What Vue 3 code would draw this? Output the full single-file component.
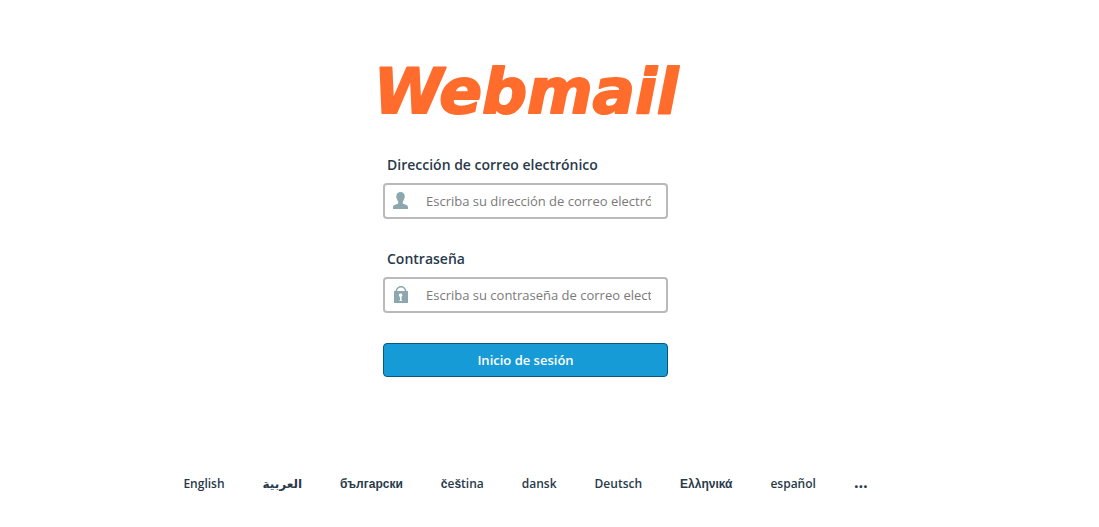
<script setup>
import { ref } from 'vue'

const email = ref('')
const password = ref('')

const before = [
  { name: 'English', lang: 'en', font: 'latin' },
  { name: 'العربية', lang: 'ar', font: 'arabic' },
  { name: 'български', lang: 'bg', font: 'wide' }
]
const after = [
  { name: 'dansk', lang: 'da', font: 'latin' },
  { name: 'Deutsch', lang: 'de', font: 'latin' },
  { name: 'Ελληνικά', lang: 'el', font: 'wide' },
  { name: 'español', lang: 'es', font: 'latin' }
]
</script>

<template>
  <main class="page">
    <h1 class="brand">
      <svg class="logo" viewBox="0 0 300 50" role="img" aria-label="Webmail">
        <text x="150" y="48" text-anchor="middle">Webmail</text>
      </svg>
    </h1>

    <form class="login" @submit.prevent>
      <label for="user">Dirección de correo electrónico</label>
      <div class="field">
        <svg class="icon" viewBox="0 0 16 18" aria-hidden="true">
          <path d="M7.500 0C9.900 0 11.500 1.300 11.500 3.600C11.500 4.200 11.900 4.400 11.800 5.200C11.700 5.900 11.300 6.100 11.100 6.700C10.800 8 10.300 8.900 9.800 9.400V11.300C10.300 12.600 15 12.400 15 15.200V17H0V15.200C0 12.400 4.700 12.600 5.200 11.300V9.400C4.700 8.900 4.200 8 3.900 6.700C3.700 6.100 3.300 5.900 3.200 5.200C3.100 4.400 3.500 4.200 3.500 3.600C3.500 1.300 5.100 0 7.500 0Z" />
        </svg>
        <input id="user" v-model="email" type="text" placeholder="Escriba su dirección de correo electrónico." />
      </div>

      <label for="pass">Contraseña</label>
      <div class="field">
        <svg class="icon" viewBox="0 0 16 18" aria-hidden="true">
          <path fill-rule="evenodd" d="M1 5H2.500C3 2 5.200 0 8 0S13 2 13.500 5H15V17H1ZM4 5H12C11.700 2.900 10.100 1.400 8 1.400S4.300 2.900 4 5ZM7.500 7.500A1.700 1.700 0 0 0 6.700 10.700V11.500H7V14H6.500V15H9V14H8.500V10.700A1.700 1.700 0 0 0 7.500 7.500Z" />
        </svg>
        <input id="pass" v-model="password" type="password" placeholder="Escriba su contraseña de correo electrónico." />
      </div>

      <button class="submit" type="submit">Inicio de sesión</button>
    </form>

    <nav class="locales" aria-label="Idioma">
      <a v-for="l in before" :key="l.lang" href="#" :lang="l.lang" :class="l.font">{{ l.name }}</a>
      <a href="#" lang="cs" class="latin"><span class="wide">č</span>e<span class="wide">š</span>tina</a>
      <a v-for="l in after" :key="l.lang" href="#" :lang="l.lang" :class="l.font">{{ l.name }}</a>
      <a href="#" class="more">…</a>
    </nav>
  </main>
</template>

<style>
body {
  margin: 0;
  background: #fff;
}
</style>

<style scoped>
.page {
  box-sizing: border-box;
  padding: 65px 48px 24px 0;
  display: flex;
  flex-direction: column;
  align-items: center;
  font-family: "Open Sans", "Liberation Sans", sans-serif;
  color: #293a4a;
}
.brand {
  margin: 0 0 40px;
  line-height: 0;
}
.logo {
  width: 300px;
  height: 50px;
  overflow: visible;
}
.logo text {
  font-family: "DejaVu Sans", sans-serif;
  font-size: 63px;
  font-weight: 700;
  font-style: italic;
  fill: #ff6c2c;
  stroke: #ff6c2c;
  stroke-width: 2px;
  stroke-linejoin: round;
}
.login {
  width: 285px;
  display: flex;
  flex-direction: column;
}
label {
  margin: 0 0 8px 4px;
  font-size: 14px;
  font-weight: 600;
  line-height: 20px;
}
.field {
  display: grid;
  align-items: center;
  margin-bottom: 30px;
}
.icon {
  grid-area: 1 / 1;
  width: 16px;
  height: 18px;
  margin-left: 10px;
  fill: #8ca7ad;
  z-index: 1;
  pointer-events: none;
}
input {
  grid-area: 1 / 1;
  box-sizing: border-box;
  width: 100%;
  height: 36px;
  padding: 0 15px 0 41px;
  border: 2px solid #bababa;
  border-radius: 4px;
  background: #fff;
  color: #293a4a;
  font-family: inherit;
  font-size: 13px;
}
input::placeholder {
  color: #7a7a7a;
}
.submit {
  height: 34px;
  padding: 0;
  border: 1px solid #095779;
  border-radius: 4px;
  background: #179bd7;
  color: #fff;
  font-family: inherit;
  font-size: 13px;
  font-weight: 600;
  cursor: pointer;
}
.locales {
  margin-top: 95px;
  display: flex;
  flex-wrap: wrap;
  align-items: baseline;
  justify-content: center;
  gap: 38px;
  font-size: 12px;
  font-weight: 600;
  line-height: 20px;
}
.locales a {
  color: #293a4a;
  text-decoration: none;
}
.wide {
  font-family: "Liberation Sans", sans-serif;
}
.arabic {
  font-family: "DejaVu Sans", sans-serif;
}
.locales .more {
  font-size: 16px;
  font-weight: 700;
}
</style>
